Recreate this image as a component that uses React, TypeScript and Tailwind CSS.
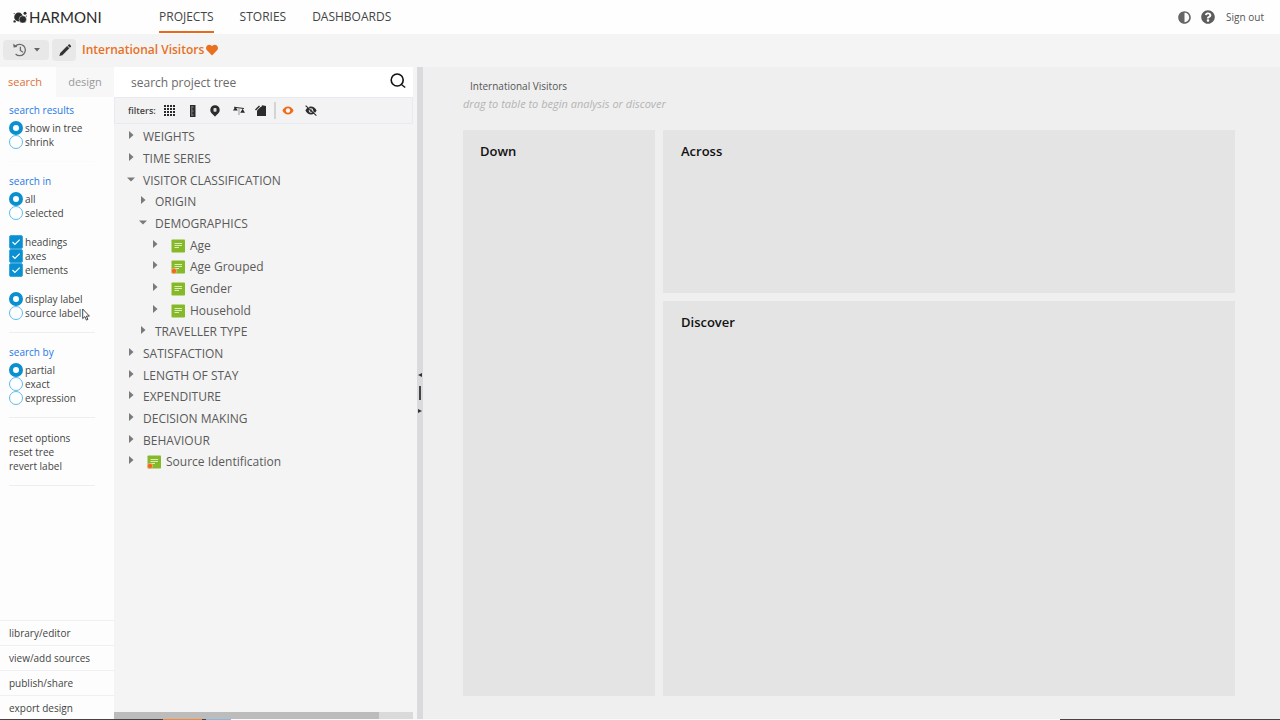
import { useState } from 'react';
import { FaHeart, FaAdjust, FaQuestionCircle } from 'react-icons/fa';

const NAV_ITEMS = ['PROJECTS', 'STORIES', 'DASHBOARDS'];

const FOOTER_LINKS = ['library/editor', 'view/add sources', 'publish/share', 'export design'];

type TreeNode = {
  label: string;
  level: number;
  open?: boolean;
  axis?: boolean;
  derived?: boolean;
};

const TREE: TreeNode[] = [
  { label: 'WEIGHTS', level: 0 },
  { label: 'TIME SERIES', level: 0 },
  { label: 'VISITOR CLASSIFICATION', level: 0, open: true },
  { label: 'ORIGIN', level: 1 },
  { label: 'DEMOGRAPHICS', level: 1, open: true },
  { label: 'Age', level: 2, axis: true },
  { label: 'Age Grouped', level: 2, axis: true, derived: true },
  { label: 'Gender', level: 2, axis: true },
  { label: 'Household', level: 2, axis: true },
  { label: 'TRAVELLER TYPE', level: 1 },
  { label: 'SATISFACTION', level: 0 },
  { label: 'LENGTH OF STAY', level: 0 },
  { label: 'EXPENDITURE', level: 0 },
  { label: 'DECISION MAKING', level: 0 },
  { label: 'BEHAVIOUR', level: 0 },
  { label: 'Source Identification', level: 0, axis: true, derived: true },
];

const INDENT = ['pl-3', 'pl-6', 'pl-9'];

function LogoMark() {
  return (
    <svg viewBox="0 0 15 13" className="h-[13px] w-[15px]" fill="#2b2b2b">
      <circle cx="5.6" cy="6" r="4.4" />
      <circle cx="9.8" cy="8.4" r="3.7" stroke="#fff" strokeWidth="0.5" />
      <circle cx="12" cy="2.2" r="1.5" />
      <circle cx="1.6" cy="10.4" r="1.2" />
      <circle cx="13.4" cy="5" r="0.6" />
      <circle cx="1.2" cy="2.6" r="0.6" />
    </svg>
  );
}

function HistoryIcon() {
  return (
    <svg viewBox="0 0 16 16" className="size-4" fill="none" stroke="#6a6a6a" strokeWidth="1.3">
      <path d="M3.400 4.200A5.700 5.700 0 1 1 3.600 12" />
      <path d="M8.400 4.800v3.700l2.600 1.700" />
      <path d="M1.200 1.600l.4 4 3.800-.6z" fill="#666" stroke="none" />
    </svg>
  );
}

function PencilIcon() {
  return (
    <svg viewBox="0 0 14 14" className="size-[14px]" fill="#333">
      <path d="M1.400 13l.8-3 6.900-6.900 2.200 2.200L4.400 12.200z" />
      <path d="M9.700 2.500l1-1c.3-.3.700-.3 1 0l1.200 1.200c.3.3.3.700 0 1l-1 1z" />
    </svg>
  );
}

function GridIcon() {
  const steps = [0, 3, 6, 9];
  return (
    <svg viewBox="0 0 11 11" className="size-[11px]" fill="#2b2b2b">
      {steps.map((y) => steps.map((x) => <rect key={`${x}-${y}`} x={x} y={y} width="2" height="2" />))}
    </svg>
  );
}

function RulerIcon() {
  return (
    <svg viewBox="0 0 6 12" className="h-3 w-[6px]">
      <rect width="5.500" height="12" fill="#2b2b2b" />
      <path d="M1 2h2.500M1 4h1.500M1 6h2.500M1 8h1.500M1 10h2.500" stroke="#bbb" strokeWidth="0.8" />
    </svg>
  );
}

function PinIcon() {
  return (
    <svg viewBox="0 0 10 12" className="h-3 w-[10px]">
      <path d="M5 .3a4.600 4.600 0 0 1 4.700 4.600C9.700 7.800 7 8.800 5 11.800 3 8.800.3 7.800.3 4.900A4.600 4.600 0 0 1 5 .3z" fill="#2b2b2b" />
      <rect x="3.500" y="3" width="3" height="3.800" rx="0.800" fill="#ddd" />
    </svg>
  );
}

function ScalesIcon() {
  return (
    <svg viewBox="0 0 12 10" className="h-[10px] w-3" fill="#2b2b2b">
      <path d="M1 .8l10 1.200v1L1 1.800z" />
      <path d="M2.400.8L4.800 4.400H0zM9.600 2.800l2.400 4H7.200z" />
      <path d="M5.500 1.800h1V9h-1z" fill="#999" />
    </svg>
  );
}

function TagIcon() {
  return (
    <svg viewBox="0 0 12 11" className="h-[11px] w-3" fill="#2b2b2b">
      <path d="M2 5.500L5.500 2H11v9H2z" />
      <path d="M0 4.400L4 .6l1 1L1 5.500z" />
      <path d="M7 .2l4 .8v1.500H6z" />
    </svg>
  );
}

function EyeIcon({ color, off }: { color: string; off?: boolean }) {
  return (
    <svg viewBox="0 0 12 11" className="h-[11px] w-3">
      <path d="M.4 5.500C1.800 2.700 3.700 1.400 6 1.400s4.200 1.300 5.600 4.100C10.200 8.300 8.300 9.600 6 9.600S1.800 8.300.4 5.500z" fill={color} />
      <circle cx="6" cy="5.500" r="2.200" fill="#f3f3f3" />
      {off && <circle cx="6" cy="5.500" r="1.200" fill={color} />}
      {off && <path d="M1.400.6L12 10" stroke="#f3f3f3" strokeWidth="0.8" />}
      {off && <path d="M.6.6l10.800 10" stroke={color} strokeWidth="1.100" />}
    </svg>
  );
}

function SearchIcon() {
  return (
    <svg viewBox="0 0 16 16" className="size-4" fill="none" stroke="#111">
      <circle cx="7.200" cy="7" r="6" strokeWidth="1.600" />
      <path d="M11.400 11.400l3.800 3.200" strokeWidth="1.300" />
    </svg>
  );
}

function AxisIcon({ derived }: { derived?: boolean }) {
  return (
    <svg viewBox="0 0 14 14" className="size-[14px] shrink-0">
      <rect x="0.500" y="0.500" width="13.500" height="13" rx="0.800" fill="#86b92a" />
      <path d="M3.500 4.500H11M3.500 6.500H11M3.500 8.500H8" stroke="#e6f3c8" strokeWidth="0.900" />
      {derived && <circle cx="3" cy="11" r="2.700" fill="#f06a1c" stroke="#f5d9b8" strokeWidth="0.500" />}
    </svg>
  );
}

function Toggle({ open }: { open?: boolean }) {
  return (
    <svg viewBox="0 0 10 10" className="mb-1 size-[10px]" fill="#7a7a7a">
      {open ? <path d="M1 3.500h8L5 7.500z" /> : <path d="M3 1v8l4.500-4z" />}
    </svg>
  );
}

type OptionProps = {
  name: string;
  label: string;
  checked: boolean;
  onChange: () => void;
};

function RadioOption({ name, label, checked, onChange }: OptionProps) {
  return (
    <label className="flex h-[14px] items-center gap-[2px]">
      <input
        type="radio"
        name={name}
        checked={checked}
        onChange={onChange}
        className="size-[14px] appearance-none rounded-full border border-[#5bbcf0] bg-white checked:border-4 checked:border-[#0a8fd0]"
      />
      {label}
    </label>
  );
}

function CheckOption({ name, label, checked, onChange }: OptionProps) {
  return (
    <label className="flex h-[14px] items-center gap-[2px]">
      <span className="relative flex size-[14px]">
        <input
          type="checkbox"
          name={name}
          checked={checked}
          onChange={onChange}
          className="size-[14px] appearance-none rounded-[2px] border border-[#3aa8de] bg-white checked:bg-[#0a8fd0]"
        />
        {checked && (
          <svg viewBox="0 0 14 14" className="pointer-events-none absolute inset-0" fill="none" stroke="#fff" strokeWidth="1.200">
            <path d="M3.500 7l2.400 2.400 4.800-4.800" />
          </svg>
        )}
      </span>
      {label}
    </label>
  );
}

function RadioGroup({ name, options }: { name: string; options: string[] }) {
  const [value, setValue] = useState(options[0]);
  return (
    <div>
      {options.map((o) => (
        <RadioOption key={o} name={name} label={o} checked={value === o} onChange={() => setValue(o)} />
      ))}
    </div>
  );
}

function Sidebar() {
  const [levels, setLevels] = useState<Record<string, boolean>>({
    headings: true,
    axes: true,
    elements: true,
  });

  return (
    <aside className="flex w-[114px] shrink-0 flex-col bg-[#fdfdfd] text-[10px] text-[#444]">
      <div className="flex h-[30px] shrink-0 text-[11px]">
        <button className="w-14 pr-1.5 text-[#e0703a]">search</button>
        <button className="flex-1 bg-[#f7f7f8] text-[#999]">design</button>
      </div>

      <div className="flex flex-1 flex-col pl-[9px] pr-[19px]">
        <section className="h-[65px] border-b border-[#fafafa] pt-1.5">
          <h2 className="mb-1 leading-[14px] text-[#1f78e6]">search results</h2>
          <RadioGroup name="results" options={['show in tree', 'shrink']} />
        </section>

        <section className="h-[171px] border-b border-[#eee] pt-3">
          <h2 className="mb-1 leading-[14px] text-[#1f78e6]">search in</h2>
          <RadioGroup name="scope" options={['all', 'selected']} />
          <div className="my-[15px]">
            {Object.keys(levels).map((k) => (
              <CheckOption
                key={k}
                name={k}
                label={k}
                checked={levels[k]}
                onChange={() => setLevels({ ...levels, [k]: !levels[k] })}
              />
            ))}
          </div>
          <RadioGroup name="label" options={['display label', 'source label']} />
        </section>

        <section className="h-[85px] border-b border-[#eee] pt-3">
          <h2 className="mb-1 leading-[14px] text-[#1f78e6]">search by</h2>
          <RadioGroup name="match" options={['partial', 'exact', 'expression']} />
        </section>

        <section className="flex h-[68px] flex-col items-start border-b border-[#eee] pt-[13px] leading-[14px]">
          <button>reset options</button>
          <button>reset tree</button>
          <button>revert label</button>
        </section>
      </div>

      <nav>
        {FOOTER_LINKS.map((l) => (
          <a key={l} href="#" className="flex h-[25px] items-center border-t border-[#f0f0f4] pl-[9px] pt-px last:h-6">
            {l}
          </a>
        ))}
      </nav>
    </aside>
  );
}

function ProjectTree() {
  const [query, setQuery] = useState('');
  return (
    <section className="flex w-[299px] shrink-0 flex-col bg-[#f4f4f4]">
      <div className="flex h-[30px] shrink-0 items-center bg-white pl-[17px] pr-[7px]">
        <input
          aria-label="search project tree"
          placeholder="search project tree"
          value={query}
          onChange={(e) => setQuery(e.target.value)}
          className="min-w-0 flex-1 pt-0.5 text-xs outline-none placeholder:text-[#6a6a6a]"
        />
        <button aria-label="run search" className="-mt-0.5">
          <SearchIcon />
        </button>
      </div>

      <div className="flex h-[27px] shrink-0 items-center border border-[#e9e9f1] bg-[#f3f3f4] pl-[13px] text-[#444]">
        <span className="w-9 text-[9px] font-semibold">filters:</span>
        <div className="flex items-center">
          <button aria-label="grids" className="flex w-[23px]"><GridIcon /></button>
          <button aria-label="measures" className="flex w-[23px] pl-[3px]"><RulerIcon /></button>
          <button aria-label="locations" className="flex w-[23px]"><PinIcon /></button>
          <button aria-label="weights" className="flex w-[22px]"><ScalesIcon /></button>
          <button aria-label="tags" className="flex w-[19px]"><TagIcon /></button>
        </div>
        <div className="flex h-[17px] items-center border-l-2 border-[#d4d4d4] pl-1.5">
          <button aria-label="visible" className="flex w-[23px]"><EyeIcon color="#ee6b18" /></button>
          <button aria-label="hidden" className="flex"><EyeIcon color="#2b2b2b" off /></button>
        </div>
      </div>

      <ul className="flex-1 pt-0.5 text-xs text-[#5a5a5a]">
        {TREE.map((node) => (
          <li key={node.label} className={`flex h-[22px] items-center nth-[3n]:h-[21px] ${INDENT[node.level]}`}>
            <button aria-label={`toggle ${node.label}`} className="mr-[7px] flex">
              <Toggle open={node.open} />
            </button>
            {node.axis && (
              <span className="mr-[5px] flex pl-1">
                <AxisIcon derived={node.derived} />
              </span>
            )}
            {node.label}
          </li>
        ))}
      </ul>

      <div className="h-[7px] shrink-0 bg-[#dadada]">
        <div className="h-full w-[265px] bg-[#bcbcbc]" />
      </div>
    </section>
  );
}

function Splitter() {
  return (
    <div className="ml-1 flex w-[6px] shrink-0 flex-col items-center justify-center gap-2 bg-[#dadadd]">
      <svg viewBox="0 0 4 6" className="h-[6px] w-1" fill="#333"><path d="M4 1v4L0 3z" /></svg>
      <div className="h-[14px] w-[2px] bg-[#444]" />
      <svg viewBox="0 0 4 6" className="h-[6px] w-1" fill="#333"><path d="M0 1v4l4-2z" /></svg>
    </div>
  );
}

function Canvas() {
  return (
    <main className="flex min-w-0 flex-1 flex-col bg-[#efefef] pb-[23px] pl-10 pr-[45px] pt-3">
      <h1 className="pl-[7px] text-[10px] leading-[14px] text-[#555]">International Visitors</h1>
      <p className="mb-4 text-[11px] italic leading-[21px] text-[#b4b4b4]">drag to table to begin analysis or discover</p>
      <div className="grid flex-1 grid-cols-[48fr_143fr] grid-rows-[7fr_17fr] gap-2 text-[13px] font-semibold leading-[18px] text-[#111]">
        <div className="row-span-2 bg-[#e4e4e4] px-[17px] py-3">Down</div>
        <div className="bg-[#e4e4e4] px-[18px] py-3">Across</div>
        <div className="bg-[#e4e4e4] px-[18px] py-3">Discover</div>
      </div>
    </main>
  );
}

export default function App() {
  const [active, setActive] = useState('PROJECTS');

  return (
    <div className="relative flex h-screen flex-col overflow-hidden bg-[#f4f4f4] font-['Open_Sans',sans-serif]">
      <header className="flex h-[34px] shrink-0 items-stretch bg-[#fefefe] pl-[13px] pr-4">
        <div className="flex w-[146px] items-center gap-px">
          <LogoMark />
          <span className="font-['Lato',sans-serif] text-[15px] text-[#2b2b2b]">HARMONI</span>
        </div>
        <nav className="mb-px flex gap-[26px] text-xs text-[#444]">
          {NAV_ITEMS.map((item) => (
            <a
              key={item}
              href="#"
              onClick={() => setActive(item)}
              className={`flex items-center border-b-2 pt-0.5 ${active === item ? 'border-[#e8681c]' : 'border-transparent'}`}
            >
              {item}
            </a>
          ))}
        </nav>
        <div className="ml-auto flex items-center text-[10px] text-[#555]">
          <button aria-label="contrast" className="mr-[10px]"><FaAdjust size={13} color="#666" /></button>
          <button aria-label="help" className="mr-[11px]"><FaQuestionCircle size={14} color="#5c5c5c" /></button>
          <a href="#">Sign out</a>
        </div>
      </header>

      <div className="flex h-8 shrink-0 items-center pl-[3px]">
        <button aria-label="history" className="mr-[3px] flex h-5 w-[46px] items-center justify-center gap-1.5 rounded-sm bg-[#e8e8e8]">
          <HistoryIcon />
          <svg viewBox="0 0 6 4" className="h-1 w-[6px]" fill="#666"><path d="M0 0h6L3 3.500z" /></svg>
        </button>
        <button aria-label="edit" className="mr-1.5 flex h-[22px] w-6 items-center justify-center rounded-sm bg-[#e8e8e8] pl-0.5">
          <PencilIcon />
        </button>
        <span className="mr-0.5 text-xs font-semibold text-[#e8701f]">International Visitors</span>
        <FaHeart size={12} color="#e8701f" />
      </div>

      <div className="mt-px flex min-h-0 flex-1">
        <Sidebar />
        <ProjectTree />
        <Splitter />
        <Canvas />
      </div>

      <div className="flex h-px shrink-0 bg-[#fafafa]">
        <div className="w-[163px] bg-[#444]" />
        <div className="w-[39px] bg-[#f08a3c]" />
        <div className="w-1 bg-[#444]" />
        <div className="w-[25px] bg-[#8ab8dc]" />
        <div className="ml-auto w-[220px] bg-[#444]" />
      </div>

      {/* mouse pointer */}
      <svg viewBox="0 0 9 13" className="pointer-events-none absolute left-[82px] top-[308px] h-[13px] w-[9px]" fill="#fff" stroke="#333" strokeWidth="0.900">
        <path d="M.7 1v9.600l2.200-2 1.500 3.500 1.500-.7-1.500-3.300h3z" />
      </svg>
    </div>
  );
}
